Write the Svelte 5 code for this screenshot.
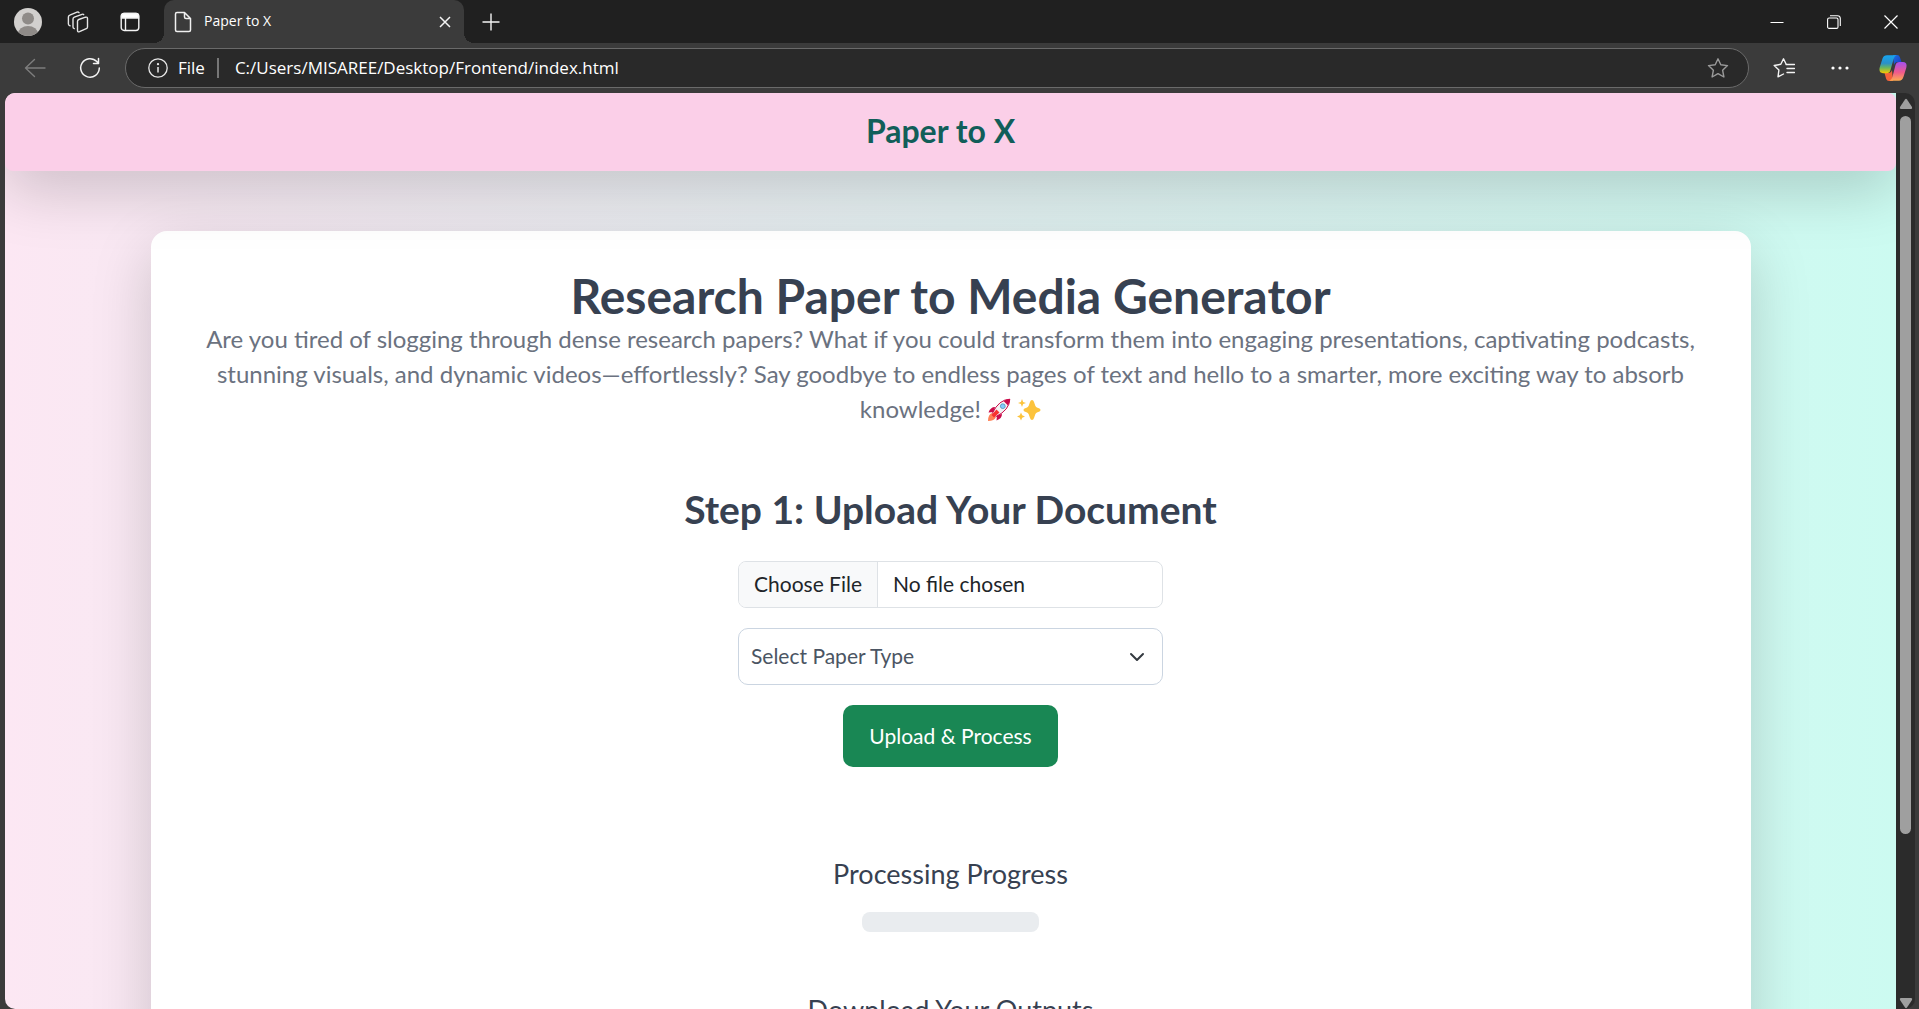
<script>
  const paperTypes = ['Research Article', 'Review Paper', 'Case Study'];
  let paperType = $state('');
  let progress = $state(0);
</script>

<div class="window">
  <header class="titlebar">
    <button class="tool avatar" aria-label="Profile">
      <svg width="28" height="28" viewBox="0 0 28 28">
        <defs><clipPath id="face"><circle cx="14" cy="14" r="14" /></clipPath></defs>
        <g clip-path="url(#face)">
          <rect width="28" height="28" fill="#d2d0ce" />
          <circle cx="14" cy="10.5" r="6" fill="#8f8b88" />
          <ellipse cx="14" cy="26" rx="10" ry="8" fill="#8f8b88" />
        </g>
      </svg>
    </button>
    <button class="tool workspaces" aria-label="Workspaces">
      <svg width="22" height="22" viewBox="0 0 22 22" fill="none" stroke="#e6e6e6" stroke-width="1.4" stroke-linejoin="round" stroke-linecap="round">
        <path d="M10.500 10.300q0-1.300 1.300-1.800l6.700-2.300q2-.5 2 1.400v8.400q0 1.200-1.200 1.700l-6.800 3q-2 .7-2-1.400z" />
        <path d="M7.300 17.600q-1.300-.2-1.300-1.500V8q0-1.300 1.300-1.800L15 3.300q1.200-.4 1.700.4" />
        <path d="M3 14.800q-1.600-.3-1.600-1.700V6q0-1.400 1.400-1.900L10 1.200q1.300-.5 2 .5" />
      </svg>
    </button>
    <button class="tool tabmenu" aria-label="Tab actions">
      <svg width="20" height="20" viewBox="0 0 20 20" fill="none" stroke="#f4f4f4" stroke-width="1.400">
        <rect x="1.200" y="1.500" width="17.600" height="17" rx="3" />
        <path d="M1.500 6V4q0-2.500 2.500-2.500h12q2.500 0 2.500 2.500v2z" fill="#fff" />
        <path d="M5.500 6v12" />
      </svg>
    </button>
    <div class="tab">
      <svg width="18" height="22" viewBox="0 0 18 22" fill="none" stroke="#f0f0f0" stroke-width="1.500" stroke-linejoin="round">
        <path d="M3 1.500h7.500L16.500 7.500V19q0 1.500-1.500 1.500H3Q1.500 20.500 1.500 19V3Q1.500 1.500 3 1.500zM10.500 1.500V6q0 1.500 1.500 1.500h4.500" />
      </svg>
      <span class="tab-title">Paper to X</span>
      <button class="tool" aria-label="Close tab">
        <svg width="12" height="12" viewBox="0 0 12 12" stroke="#f4f4f4" stroke-width="1.500"><path d="M1 1 11 11M11 1 1 11" /></svg>
      </button>
    </div>
    <button class="tool newtab" aria-label="New tab">
      <svg width="18" height="18" viewBox="0 0 18 18" stroke="#f4f4f4" stroke-width="1.400"><path d="M9 0.500v17M0.500 9h17" /></svg>
    </button>
    <div class="controls">
      <button class="tool" aria-label="Minimize">
        <svg width="14" height="14" viewBox="0 0 14 14" stroke="#fff"><path d="M0.500 7.500h13" /></svg>
      </button>
      <button class="tool" aria-label="Restore">
        <svg width="14" height="14" viewBox="0 0 14 14" fill="none" stroke="#fff" stroke-width="1.100"><rect x="0.600" y="3" width="10.400" height="10.400" rx="1.500" /><path d="M3 .7h7.500q2.800 0 2.800 2.800V11" /></svg>
      </button>
      <button class="tool" aria-label="Close window">
        <svg width="14" height="14" viewBox="0 0 14 14" stroke="#fff" stroke-width="1.200"><path d="M.5.5 13.500 13.500M13.500.5.5 13.500" /></svg>
      </button>
    </div>
  </header>

  <nav class="toolbar" aria-label="Browser">
    <button class="tool back" aria-label="Back">
      <svg width="22" height="22" viewBox="0 0 22 22" fill="none" stroke="#7d7d7d" stroke-width="1.400" stroke-linecap="round" stroke-linejoin="round"><path d="M21 11H1.500M10.500 2.500 1.500 11l9 8.500" /></svg>
    </button>
    <button class="tool reload" aria-label="Refresh">
      <svg width="22" height="22" viewBox="0 0 22 22" fill="none" stroke="#f4f4f4" stroke-width="1.500" stroke-linecap="round" stroke-linejoin="round"><path d="M20.300 11A9.300 9.300 0 1 1 17.800 4.600L19.500 6.500M19.500 1.500v5h-5" /></svg>
    </button>
    <div class="address">
      <svg width="20" height="20" viewBox="0 0 20 20" fill="none" stroke="#e8e8e8" stroke-width="1.300"><circle cx="10" cy="10" r="9.200" /><path d="M10 9v5.500" stroke-width="1.500" /><circle cx="10" cy="6.200" r=".5" fill="#e8e8e8" /></svg>
      <span class="scheme">File</span>
      <input class="url" aria-label="Address" value="C:/Users/MISAREE/Desktop/Frontend/index.html" />
      <button class="tool" aria-label="Add to favorites">
        <svg width="22" height="22" viewBox="0 0 22 22" fill="none" stroke="#9a9a9a" stroke-width="1.400" stroke-linejoin="round"><path d="M11 1.800 13.800 7.800 20.500 8.600 15.600 13.200 16.900 20 11 16.600 5.100 20 6.400 13.200 1.500 8.600 8.200 7.800z" /></svg>
      </button>
    </div>
    <div class="extras">
      <button class="tool" aria-label="Favorites">
        <svg width="22" height="22" viewBox="0 0 22 22" fill="none" stroke="#f4f4f4" stroke-width="1.400" stroke-linejoin="round" stroke-linecap="round"><path d="M17.500 7.500 13.200 7.300 10.500 1.800 7.800 7.300 1.200 8.500 5.900 13 5 19.800 10.500 17M14 11.500h7.500M14 15.500h7.500M13 7.500h8.500" /></svg>
      </button>
      <button class="tool" aria-label="Settings and more">
        <svg width="20" height="20" viewBox="0 0 20 20" fill="#fff"><circle cx="3" cy="10" r="1.600" /><circle cx="10" cy="10" r="1.600" /><circle cx="17" cy="10" r="1.600" /></svg>
      </button>
      <button class="tool copilot" aria-label="Copilot">
        <svg width="28" height="28" viewBox="0 0 28 28">
          <defs>
            <linearGradient id="cpA" x1="0" y1="0" x2="0" y2="1"><stop offset="0" stop-color="#16a5f0" /><stop offset=".45" stop-color="#2b90c8" /><stop offset=".7" stop-color="#6bb75c" /><stop offset="1" stop-color="#f8c900" /></linearGradient>
            <linearGradient id="cpB" x1="0" y1="0" x2="0" y2="1"><stop offset="0" stop-color="#a450f0" /><stop offset=".55" stop-color="#f05a8c" /><stop offset="1" stop-color="#fdac50" /></linearGradient>
            <linearGradient id="cpC" x1="0" y1="0" x2="1" y2="1"><stop offset="0" stop-color="#2170e0" /><stop offset="1" stop-color="#1439c4" /></linearGradient>
          </defs>
          <path d="M14 1h4q2.200 0 2.900 2.200L22.500 8h-4q-2.500 0-3.500 3z" fill="url(#cpC)" />
          <path d="M14 27h-4q-2.200 0-2.900-2.200L5.500 19h4q2.500 0 3.500-3z" fill="#f4623a" />
          <path d="M8 1.200h9.500Q15.500 2 14.600 5L11.500 16q-.8 3.200-4 3.200H4Q-.5 19 .7 13.500L3.500 4.500Q4.700 1.200 8 1.200z" fill="url(#cpA)" />
          <path d="M20.500 8H24q4.500.2 3.300 5.700l-2.800 9Q23.300 26.800 20 26.800h-9.500q2-.8 2.900-3.800L16.500 11q.8-3 4-3z" fill="url(#cpB)" />
        </svg>
      </button>
    </div>
  </nav>

  <div class="viewport">
    <div class="page">
      <div class="brandbar"><h2 class="brand">Paper to X</h2></div>
      <main class="card">
        <h1>Research Paper to Media Generator</h1>
        <p class="intro">
          Are you tired of slogging through dense research papers? What if you could transform them into engaging presentations, captivating podcasts,<br />
          stunning visuals, and dynamic videos—effortlessly? Say goodbye to endless pages of text and hello to a smarter, more exciting way to absorb<br />
          knowledge!
          <svg class="emoji" role="img" aria-label="rocket" viewBox="0 0 24 24">
            <path d="M8 9Q3.500 9 1.500 14.500L7 14zM15 16q0 4.500-5.500 6.500L10 17z" fill="#ca0b4a" />
            <path d="M5 15Q1 16.500 1 23q6.500 0 8-4z" fill="#ff8257" />
            <path d="M22.800 1.200Q12 1.500 5.500 15l3.500 3.500Q22.500 12 22.800 1.200z" fill="#f4f4f4" stroke="#ca0b4a" />
            <path d="M23 1q-3.500 0-6.500 2l4.500 4.500Q23 4.500 23 1z" fill="#ca0b4a" />
            <path d="M9.500 11.500 4.500 17l2.500 2.500L12.500 14.500z" fill="#f8312f" />
            <circle cx="15.800" cy="8.200" r="2.400" fill="#83cbff" stroke="#5092b8" stroke-width=".8" />
          </svg>
          <svg class="emoji" role="img" aria-label="sparkles" viewBox="0 0 24 24" fill="#fcc33c">
            <path d="M15 2q1.400 0 2 2l1.300 3.700Q18.900 9.200 20.500 9.700L22.500 10.500q2 1.500 0 3l-2 .8q-1.600.5-2.200 2L17 20q-.6 2-2 2t-2-2l-1.300-3.700q-.6-1.500-2.200-2L7.500 13.500q-2-1.500 0-3l2-.8q1.600-.5 2.200-2L13 4q.6-2 2-2z" />
            <path d="M5 1 6.100 3.900 9 5 6.100 6.100 5 9 3.900 6.100 1 5 3.900 3.900zM4 14.500 5.200 17.300 8 18.500 5.200 19.700 4 22.500 2.800 19.700 0 18.500 2.800 17.300z" />
          </svg>
        </p>

        <h2 class="step">Step 1: Upload Your Document</h2>
        <form class="upload" onsubmit={(e) => e.preventDefault()}>
          <input class="file" type="file" aria-label="Document" />
          <select class="type" aria-label="Paper type" bind:value={paperType}>
            <option value="">Select Paper Type</option>
            {#each paperTypes as name}<option value={name}>{name}</option>{/each}
          </select>
          <button class="submit" type="submit">Upload &amp; Process</button>
        </form>

        <h3 class="section">Processing Progress</h3>
        <div class="progress" role="progressbar" aria-label="Processing progress" aria-valuenow={progress} aria-valuemin="0" aria-valuemax="100">
          <div class="fill" style:width="{progress}%"></div>
        </div>
        <h3 class="section">Download Your Outputs</h3>
      </main>
    </div>
    <div class="scroll" aria-hidden="true">
      <svg width="14" height="12" viewBox="0 0 14 12" fill="#9f9f9f"><path d="M6 1.500q1-1.500 2 0l5 7.500q.8 2-1 2H2q-1.800 0-1-2z" /></svg>
      <div class="track"><div class="thumb"></div></div>
      <svg width="14" height="12" viewBox="0 0 14 12" fill="#9f9f9f"><path d="M6 10.500q1 1.500 2 0l5-7.500q.8-2-1-2H2Q.2 1 1 3z" /></svg>
    </div>
  </div>
</div>

<style>
  :global(body) {
    margin: 0;
    overflow: hidden;
  }
  .window {
    height: 100vh;
    display: flex;
    flex-direction: column;
    overflow: hidden;
    background: #3b3b3b;
    color: #fff;
    font-family: 'Open Sans', 'Noto Sans', sans-serif;
  }
  button,
  input,
  select {
    font: inherit;
    color: inherit;
    box-sizing: border-box;
  }
  svg {
    flex: none;
    display: block;
  }
  .tool {
    border: 0;
    padding: 0;
    background: none;
    display: grid;
    place-items: center;
    flex: none;
  }
  .titlebar {
    height: 43px;
    flex: none;
    display: flex;
    align-items: center;
    background: #202020;
    padding-left: 14px;
  }
  .workspaces {
    margin-left: 25px;
  }
  .tabmenu {
    margin: 0 24px 0 31px;
  }
  .tab {
    position: relative;
    align-self: stretch;
    width: 300px;
    box-sizing: border-box;
    display: flex;
    align-items: center;
    padding: 0 13px 0 10px;
    background: #3b3b3b;
    border-radius: 10px 10px 0 0;
  }
  .tab::before,
  .tab::after {
    content: '';
    position: absolute;
    bottom: 0;
    width: 10px;
    height: 10px;
  }
  .tab::before {
    right: 100%;
    background: radial-gradient(circle at 0 0, #202020 10px, #3b3b3b 10px);
  }
  .tab::after {
    left: 100%;
    background: radial-gradient(circle at 100% 0, #202020 10px, #3b3b3b 10px);
  }
  .tab-title {
    flex: 1;
    padding: 0 0 2px 12px;
    font-size: 14px;
    line-height: 20px;
  }
  .newtab {
    margin-left: 18px;
  }
  .controls {
    margin-left: auto;
    display: flex;
    gap: 43px;
    padding-right: 21px;
  }
  .toolbar {
    height: 50px;
    flex: none;
    display: flex;
    align-items: center;
    padding: 0 12px 0 24px;
  }
  .reload {
    margin: 0 24px 0 33px;
  }
  .address {
    flex: 1;
    height: 40px;
    box-sizing: border-box;
    display: flex;
    align-items: center;
    padding: 0 19px 0 22px;
    background: #292929;
    border: 1px solid #6a6a6a;
    border-radius: 20px;
    font-size: 17px;
  }
  .scheme {
    padding: 0 12px 0 10px;
    line-height: 20px;
    border-right: 2px solid #777;
  }
  .url {
    flex: 1;
    min-width: 0;
    border: 0;
    padding: 0 0 2px 16px;
    background: none;
    outline: 0;
  }
  .extras {
    display: flex;
    align-items: center;
    gap: 35px;
    padding-left: 24px;
  }
  .copilot {
    margin-left: -6px;
  }
  .viewport {
    flex: 1;
    min-height: 0;
    display: flex;
    margin: 0 4px 0 5px;
    border-radius: 10px;
    overflow: hidden;
    background: #2b2b2b;
  }
  .page {
    flex: 1;
    overflow: hidden;
    background: linear-gradient(to right, #fce7f3, #ccfbf1);
    font-family: Lato, 'Open Sans', sans-serif;
    color: #374151;
  }
  .brandbar {
    position: relative;
    z-index: 1;
    height: 78px;
    box-sizing: border-box;
    padding: 0 20px 2px 0;
    display: grid;
    place-items: center;
    background: #fbcfe8;
    border-radius: 8px;
    box-shadow: 0 20px 60px rgb(0 0 0 / 0.175);
  }
  .brand {
    margin: 0;
    font-size: 32px;
    line-height: 40px;
    font-weight: 700;
    color: #115e59;
  }
  .card {
    width: calc(100% - 40px);
    max-width: 1600px;
    height: 1400px;
    box-sizing: border-box;
    margin: 60px auto 0;
    padding: 40px;
    background: #fff;
    border-radius: 16px;
    box-shadow: 0 20px 60px rgb(0 0 0 / 0.175);
    text-align: center;
  }
  h1 {
    margin: 0;
    font-size: 48px;
    line-height: 50px;
    font-weight: 700;
  }
  .intro {
    margin: 0;
    font-size: 24px;
    line-height: 35px;
    color: #6b7280;
  }
  .emoji {
    display: inline-block;
    width: 24px;
    height: 24px;
    vertical-align: -4px;
  }
  .step {
    margin: 58px 0 27px;
    font-size: 39px;
    line-height: 50px;
    font-weight: 700;
  }
  .upload {
    display: flex;
    flex-direction: column;
    align-items: center;
    gap: 20px;
    font-size: 21px;
  }
  .file,
  .type {
    width: 100%;
    max-width: 425px;
    background-color: #fff;
  }
  .file {
    height: 47px;
    border: 1px solid #dee2e6;
    border-radius: 8px;
    color: #212529;
    line-height: 43px;
    overflow: hidden;
  }
  .file::file-selector-button {
    height: 45px;
    margin: 0 15px 0 0;
    padding: 0 15px 2px;
    border: 0;
    border-right: 1px solid #dee2e6;
    background: #f8f9fa;
    font: inherit;
    color: inherit;
  }
  .type {
    appearance: none;
    height: 57px;
    padding: 0 40px 2px 12px;
    border: 1px solid #cbd5e1;
    border-radius: 10px;
    color: #4b5563;
    background-image: url("data:image/svg+xml,%3Csvg xmlns='http://www.w3.org/2000/svg' viewBox='0 0 16 16'%3E%3Cpath fill='none' stroke='%23343a40' stroke-linecap='round' stroke-linejoin='round' stroke-width='2' d='m2 5 6 6 6-6'/%3E%3C/svg%3E");
    background-repeat: no-repeat;
    background-position: right 17px center;
    background-size: 16px;
  }
  .submit {
    height: 62px;
    width: 215px;
    padding-bottom: 2px;
    border: 0;
    border-radius: 10px;
    background: #198754;
    color: #fff;
  }
  .section {
    margin: 91px 0 0;
    font-size: 27px;
    line-height: 32px;
    font-weight: 400;
  }
  .progress {
    width: 177px;
    height: 20px;
    margin: 22px auto 0;
    border-radius: 8px;
    background: #e9ecef;
    overflow: hidden;
  }
  .fill {
    height: 100%;
    background: #198754;
  }
  .progress + .section {
    margin-top: 62px;
  }
  .scroll {
    width: 19px;
    flex: none;
    display: flex;
    flex-direction: column;
    align-items: center;
    gap: 6px;
    padding-top: 5px;
  }
  .track {
    flex: 1;
  }
  .thumb {
    width: 11px;
    height: 82%;
    border-radius: 6px;
    background: #9f9f9f;
  }
</style>
